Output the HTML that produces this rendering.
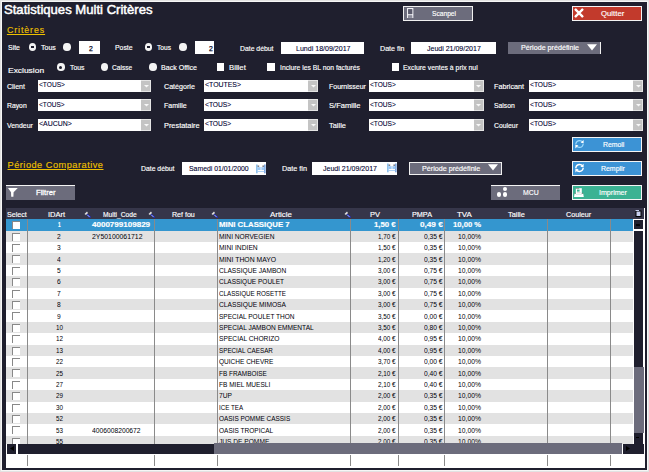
<!DOCTYPE html>
<html><head><meta charset="utf-8"><style>
html,body{margin:0;padding:0;width:649px;height:472px;overflow:hidden;background:#e2e2e2}
body>div,body>svg,#w>div,#w>svg{position:absolute}
#w{position:absolute;left:0;top:0;width:649px;height:472px}
#w div, #w svg{position:absolute}
.t{white-space:pre;font-family:"Liberation Sans",sans-serif;transform-origin:0 0}
</style></head><body><div id="w">
<div style="left:0px;top:0px;width:649px;height:472px;background:#e2e2e2;"></div>
<div style="left:1px;top:1px;width:647px;height:470px;background:#f6f6f6;"></div>
<div style="left:2px;top:2px;width:645px;height:468px;background:#1f1f2e;"></div>
<div class="t" style="left:4.40px;top:3.39px;font-size:13.6px;line-height:13.6px;font-weight:normal;color:#ffffff;transform:scaleX(0.9635);-webkit-text-stroke:0.5px #ffffff;">Statistiques Multi Critères</div>
<div style="left:403px;top:6px;width:70px;height:15px;background:#6c6c7c;box-sizing:border-box;border:1px solid #f0f0f0"></div>
<div class="t" style="left:431.70px;top:10.04px;font-size:7.4px;line-height:7.4px;font-weight:normal;color:#ffffff;transform:scaleX(0.8982);-webkit-text-stroke:0.15px #ffffff;">Scanpel</div>
<svg style="left:407px;top:8px" width="7" height="10" viewBox="0 0 7 10"><path d="M0.6 10 V0.6 H5.8 V10 M0.6 6.6 H5.8" fill="none" stroke="#f4f4f8" stroke-width="1.1"/><rect x="1.2" y="1.2" width="4" height="5" fill="#5a5a6c"/><path d="M1.5 8 H5 M1.5 9.3 H5" stroke="#b8b8c4" stroke-width="0.7"/></svg>
<div style="left:571.7px;top:5.8px;width:70.7px;height:15.2px;background:#c23a2c;box-sizing:border-box;border:1px solid #f4f4f4"></div>
<div class="t" style="left:600.60px;top:9.77px;font-size:7.6px;line-height:7.6px;font-weight:normal;color:#ffffff;transform:scaleX(1.0221);-webkit-text-stroke:0.15px #ffffff;">Quitter</div>
<svg style="left:574.2px;top:7.9px" width="10" height="10" viewBox="0 0 10 10"><path d="M1.4 1.4 L8.6 8.6 M8.6 1.4 L1.4 8.6" stroke="#fff" stroke-width="2.3"/><path d="M0.2 1.6 L1.6 0.2 L3 1.8 L1.8 3Z M9.8 1.6 L8.4 0.2 L7 1.8 L8.2 3Z M0.2 8.4 L1.6 9.8 L3 8.2 L1.8 7Z M9.8 8.4 L8.4 9.8 L7 8.2 L8.2 7Z" fill="#fff"/></svg>
<div class="t" style="left:6.90px;top:25.55px;font-size:8.8px;line-height:8.8px;font-weight:normal;color:#eec000;letter-spacing:0.925px;-webkit-text-stroke:0.15px #eec000;text-decoration:underline">Critères</div>
<div class="t" style="left:7.90px;top:44.21px;font-size:7.2px;line-height:7.2px;font-weight:normal;color:#ffffff;transform:scaleX(0.9685);-webkit-text-stroke:0.15px #ffffff;">Site</div>
<div class="t" style="left:40.70px;top:44.21px;font-size:7.2px;line-height:7.2px;font-weight:normal;color:#ffffff;transform:scaleX(0.9745);-webkit-text-stroke:0.15px #ffffff;">Tous</div>
<div class="t" style="left:115.40px;top:44.21px;font-size:7.2px;line-height:7.2px;font-weight:normal;color:#ffffff;transform:scaleX(0.9570);-webkit-text-stroke:0.15px #ffffff;">Poste</div>
<div class="t" style="left:156.70px;top:44.21px;font-size:7.2px;line-height:7.2px;font-weight:normal;color:#ffffff;transform:scaleX(0.9218);-webkit-text-stroke:0.15px #ffffff;">Tous</div>
<div style="left:28.8px;top:43px;width:7.4px;height:8px;background:#f4f4f4;border-radius:50%"></div>
<div style="left:31.2px;top:46.2px;width:2.6px;height:1.8px;background:#1f1f2e"></div>
<div style="left:63.4px;top:43.2px;width:7.2px;height:7.6px;background:#f4f4f4;border-radius:50%"></div>
<div style="left:144.60000000000002px;top:43px;width:7.4px;height:8px;background:#f4f4f4;border-radius:50%"></div>
<div style="left:147.0px;top:46.2px;width:2.6px;height:1.8px;background:#1f1f2e"></div>
<div style="left:179.4px;top:43.2px;width:7.2px;height:7.6px;background:#f4f4f4;border-radius:50%"></div>
<div style="left:79px;top:41.2px;width:21px;height:12.7px;background:#ffffff;"></div>
<div class="t" style="left:88.80px;top:44.57px;font-size:7.6px;line-height:7.6px;font-weight:normal;color:#000020;transform:scaleX(0.8974);-webkit-text-stroke:0.25px #000020;">2</div>
<div style="left:194.8px;top:41px;width:19px;height:13px;background:#ffffff;"></div>
<div class="t" style="left:209.00px;top:44.57px;font-size:7.6px;line-height:7.6px;font-weight:normal;color:#000020;transform:scaleX(0.8974);-webkit-text-stroke:0.25px #000020;">2</div>
<div class="t" style="left:239.70px;top:44.61px;font-size:7.2px;line-height:7.2px;font-weight:normal;color:#ffffff;transform:scaleX(0.9525);-webkit-text-stroke:0.15px #ffffff;">Date début</div>
<div style="left:280.5px;top:41.8px;width:83.5px;height:12px;background:#ffffff;"></div>
<div class="t" style="left:295.50px;top:44.74px;font-size:7.4px;line-height:7.4px;font-weight:normal;color:#000030;transform:scaleX(0.9538);-webkit-text-stroke:0.1px #000030;">Lundi 18/09/2017</div>
<div class="t" style="left:380.40px;top:44.61px;font-size:7.2px;line-height:7.2px;font-weight:normal;color:#ffffff;transform:scaleX(0.9927);-webkit-text-stroke:0.15px #ffffff;">Date fin</div>
<div style="left:410.9px;top:42px;width:85px;height:12px;background:#ffffff;"></div>
<div class="t" style="left:426.60px;top:44.74px;font-size:7.4px;line-height:7.4px;font-weight:normal;color:#000030;transform:scaleX(0.9485);-webkit-text-stroke:0.1px #000030;">Jeudi 21/09/2017</div>
<div style="left:508px;top:42.2px;width:93px;height:11.7px;background:#6c6c7c;box-sizing:border-box;border-right:1px solid #f0f0f0"></div>
<div class="t" style="left:521.00px;top:44.41px;font-size:7.2px;line-height:7.2px;font-weight:normal;color:#ffffff;transform:scaleX(0.9941);-webkit-text-stroke:0.15px #ffffff;">Période prédéfinie</div>
<svg style="left:587.4px;top:44.400000000000006px" width="10" height="7" viewBox="0 0 10 7"><path d="M0 0.2 H10 L5 6.4 Z" fill="#ffffff"/></svg>
<div class="t" style="left:8.30px;top:66.91px;font-size:7.2px;line-height:7.2px;font-weight:normal;color:#ffffff;transform:scaleX(1.1734);-webkit-text-stroke:0.15px #ffffff;">Exclusion</div>
<div style="left:57.4px;top:63.2px;width:7.2px;height:7.6px;background:#f4f4f4;border-radius:50%"></div>
<div style="left:59px;top:65.5px;width:3px;height:3px;background:#1f1f2e;border-radius:50%"></div>
<div class="t" style="left:69.50px;top:63.71px;font-size:7.2px;line-height:7.2px;font-weight:normal;color:#ffffff;transform:scaleX(0.9481);-webkit-text-stroke:0.15px #ffffff;">Tous</div>
<div style="left:100.60000000000001px;top:63.0px;width:7.2px;height:7.6px;background:#f4f4f4;border-radius:50%"></div>
<div class="t" style="left:111.80px;top:63.71px;font-size:7.2px;line-height:7.2px;font-weight:normal;color:#ffffff;transform:scaleX(0.9188);-webkit-text-stroke:0.15px #ffffff;">Caisse</div>
<div style="left:149.4px;top:63.0px;width:7.2px;height:7.6px;background:#f4f4f4;border-radius:50%"></div>
<div class="t" style="left:161.00px;top:63.71px;font-size:7.2px;line-height:7.2px;font-weight:normal;color:#ffffff;transform:scaleX(0.9829);-webkit-text-stroke:0.15px #ffffff;">Back Office</div>
<div style="left:216.6px;top:63.4px;width:7.9px;height:7.2px;background:#ffffff;"></div>
<div class="t" style="left:228.70px;top:63.71px;font-size:7.2px;line-height:7.2px;font-weight:normal;color:#ffffff;transform:scaleX(1.0774);-webkit-text-stroke:0.15px #ffffff;">Billet</div>
<div style="left:267.3px;top:63.4px;width:7.7px;height:7.2px;background:#ffffff;"></div>
<div class="t" style="left:279.60px;top:63.71px;font-size:7.2px;line-height:7.2px;font-weight:normal;color:#ffffff;transform:scaleX(0.9429);-webkit-text-stroke:0.15px #ffffff;">Inclure les BL non facturés</div>
<div style="left:391.5px;top:63.4px;width:7.3px;height:7.2px;background:#ffffff;"></div>
<div class="t" style="left:403.00px;top:63.71px;font-size:7.2px;line-height:7.2px;font-weight:normal;color:#ffffff;transform:scaleX(0.9539);-webkit-text-stroke:0.15px #ffffff;">Exclure ventes à prix nul</div>
<div class="t" style="left:7.40px;top:82.71px;font-size:7.2px;line-height:7.2px;font-weight:normal;color:#ffffff;transform:scaleX(0.9733);-webkit-text-stroke:0.15px #ffffff;">Client</div>
<div style="left:37.6px;top:79.8px;width:113.5px;height:12.2px;background:#ffffff;"></div>
<div style="left:141.1px;top:79.8px;width:10px;height:12.2px;background:#c4c4c4;box-sizing:border-box;border:1px solid #e4e4e4;border-left:none"></div>
<svg style="left:143.9px;top:84.8px" width="5" height="3" viewBox="0 0 5 3"><path d="M0 0 H5 L2.5 2.5 Z" fill="#f8f8f8"/></svg>
<div class="t" style="left:38.80px;top:81.11px;font-size:7.2px;line-height:7.2px;font-weight:normal;color:#000030;transform:scaleX(0.9173);-webkit-text-stroke:0.1px #000030;">&lt;TOUS&gt;</div>
<div class="t" style="left:7.40px;top:102.11px;font-size:7.2px;line-height:7.2px;font-weight:normal;color:#ffffff;transform:scaleX(0.9480);-webkit-text-stroke:0.15px #ffffff;">Rayon</div>
<div style="left:37.6px;top:99.2px;width:113.5px;height:12.2px;background:#ffffff;"></div>
<div style="left:141.1px;top:99.2px;width:10px;height:12.2px;background:#c4c4c4;box-sizing:border-box;border:1px solid #e4e4e4;border-left:none"></div>
<svg style="left:143.9px;top:104.2px" width="5" height="3" viewBox="0 0 5 3"><path d="M0 0 H5 L2.5 2.5 Z" fill="#f8f8f8"/></svg>
<div class="t" style="left:38.80px;top:100.51px;font-size:7.2px;line-height:7.2px;font-weight:normal;color:#000030;transform:scaleX(0.9032);-webkit-text-stroke:0.1px #000030;">&lt;TOUS&gt;</div>
<div class="t" style="left:7.40px;top:121.91px;font-size:7.2px;line-height:7.2px;font-weight:normal;color:#ffffff;transform:scaleX(0.9671);-webkit-text-stroke:0.15px #ffffff;">Vendeur</div>
<div style="left:37.6px;top:119.0px;width:113.5px;height:12.2px;background:#ffffff;"></div>
<div style="left:141.1px;top:119.0px;width:10px;height:12.2px;background:#c4c4c4;box-sizing:border-box;border:1px solid #e4e4e4;border-left:none"></div>
<svg style="left:143.9px;top:124.0px" width="5" height="3" viewBox="0 0 5 3"><path d="M0 0 H5 L2.5 2.5 Z" fill="#f8f8f8"/></svg>
<div class="t" style="left:38.80px;top:120.31px;font-size:7.2px;line-height:7.2px;font-weight:normal;color:#000030;transform:scaleX(0.9690);-webkit-text-stroke:0.1px #000030;">&lt;AUCUN&gt;</div>
<div class="t" style="left:163.90px;top:82.71px;font-size:7.2px;line-height:7.2px;font-weight:normal;color:#ffffff;transform:scaleX(0.9913);-webkit-text-stroke:0.15px #ffffff;">Catégorie</div>
<div style="left:203.6px;top:79.8px;width:114.29999999999998px;height:12.2px;background:#ffffff;"></div>
<div style="left:307.9px;top:79.8px;width:10px;height:12.2px;background:#c4c4c4;box-sizing:border-box;border:1px solid #e4e4e4;border-left:none"></div>
<svg style="left:310.7px;top:84.8px" width="5" height="3" viewBox="0 0 5 3"><path d="M0 0 H5 L2.5 2.5 Z" fill="#f8f8f8"/></svg>
<div class="t" style="left:204.80px;top:81.11px;font-size:7.2px;line-height:7.2px;font-weight:normal;color:#000030;transform:scaleX(0.9620);-webkit-text-stroke:0.1px #000030;">&lt;TOUTES&gt;</div>
<div class="t" style="left:163.90px;top:102.11px;font-size:7.2px;line-height:7.2px;font-weight:normal;color:#ffffff;transform:scaleX(0.9796);-webkit-text-stroke:0.15px #ffffff;">Famille</div>
<div style="left:203.6px;top:99.2px;width:114.29999999999998px;height:12.2px;background:#ffffff;"></div>
<div style="left:307.9px;top:99.2px;width:10px;height:12.2px;background:#c4c4c4;box-sizing:border-box;border:1px solid #e4e4e4;border-left:none"></div>
<svg style="left:310.7px;top:104.2px" width="5" height="3" viewBox="0 0 5 3"><path d="M0 0 H5 L2.5 2.5 Z" fill="#f8f8f8"/></svg>
<div class="t" style="left:204.80px;top:100.51px;font-size:7.2px;line-height:7.2px;font-weight:normal;color:#000030;transform:scaleX(0.9279);-webkit-text-stroke:0.1px #000030;">&lt;TOUS&gt;</div>
<div class="t" style="left:163.90px;top:121.91px;font-size:7.2px;line-height:7.2px;font-weight:normal;color:#ffffff;transform:scaleX(1.0240);-webkit-text-stroke:0.15px #ffffff;">Prestataire</div>
<div style="left:203.6px;top:119.0px;width:114.29999999999998px;height:12.2px;background:#ffffff;"></div>
<div style="left:307.9px;top:119.0px;width:10px;height:12.2px;background:#c4c4c4;box-sizing:border-box;border:1px solid #e4e4e4;border-left:none"></div>
<svg style="left:310.7px;top:124.0px" width="5" height="3" viewBox="0 0 5 3"><path d="M0 0 H5 L2.5 2.5 Z" fill="#f8f8f8"/></svg>
<div class="t" style="left:204.80px;top:120.31px;font-size:7.2px;line-height:7.2px;font-weight:normal;color:#000030;transform:scaleX(0.9279);-webkit-text-stroke:0.1px #000030;">&lt;TOUS&gt;</div>
<div class="t" style="left:328.90px;top:82.71px;font-size:7.2px;line-height:7.2px;font-weight:normal;color:#ffffff;transform:scaleX(0.9723);-webkit-text-stroke:0.15px #ffffff;">Fournisseur</div>
<div style="left:368.5px;top:79.8px;width:115.10000000000002px;height:12.2px;background:#ffffff;"></div>
<div style="left:473.6px;top:79.8px;width:10px;height:12.2px;background:#c4c4c4;box-sizing:border-box;border:1px solid #e4e4e4;border-left:none"></div>
<svg style="left:476.40000000000003px;top:84.8px" width="5" height="3" viewBox="0 0 5 3"><path d="M0 0 H5 L2.5 2.5 Z" fill="#f8f8f8"/></svg>
<div class="t" style="left:369.70px;top:81.11px;font-size:7.2px;line-height:7.2px;font-weight:normal;color:#000030;transform:scaleX(0.9138);-webkit-text-stroke:0.1px #000030;">&lt;TOUS&gt;</div>
<div class="t" style="left:328.90px;top:102.11px;font-size:7.2px;line-height:7.2px;font-weight:normal;color:#ffffff;transform:scaleX(1.0511);-webkit-text-stroke:0.15px #ffffff;">S/Famille</div>
<div style="left:368.5px;top:99.2px;width:115.10000000000002px;height:12.2px;background:#ffffff;"></div>
<div style="left:473.6px;top:99.2px;width:10px;height:12.2px;background:#c4c4c4;box-sizing:border-box;border:1px solid #e4e4e4;border-left:none"></div>
<svg style="left:476.40000000000003px;top:104.2px" width="5" height="3" viewBox="0 0 5 3"><path d="M0 0 H5 L2.5 2.5 Z" fill="#f8f8f8"/></svg>
<div class="t" style="left:369.70px;top:100.51px;font-size:7.2px;line-height:7.2px;font-weight:normal;color:#000030;transform:scaleX(0.9138);-webkit-text-stroke:0.1px #000030;">&lt;TOUS&gt;</div>
<div class="t" style="left:328.90px;top:121.91px;font-size:7.2px;line-height:7.2px;font-weight:normal;color:#ffffff;transform:scaleX(1.0372);-webkit-text-stroke:0.15px #ffffff;">Taille</div>
<div style="left:368.5px;top:119.0px;width:115.10000000000002px;height:12.2px;background:#ffffff;"></div>
<div style="left:473.6px;top:119.0px;width:10px;height:12.2px;background:#c4c4c4;box-sizing:border-box;border:1px solid #e4e4e4;border-left:none"></div>
<svg style="left:476.40000000000003px;top:124.0px" width="5" height="3" viewBox="0 0 5 3"><path d="M0 0 H5 L2.5 2.5 Z" fill="#f8f8f8"/></svg>
<div class="t" style="left:369.70px;top:120.31px;font-size:7.2px;line-height:7.2px;font-weight:normal;color:#000030;transform:scaleX(0.9138);-webkit-text-stroke:0.1px #000030;">&lt;TOUS&gt;</div>
<div class="t" style="left:494.20px;top:82.71px;font-size:7.2px;line-height:7.2px;font-weight:normal;color:#ffffff;transform:scaleX(1.0044);-webkit-text-stroke:0.15px #ffffff;">Fabricant</div>
<div style="left:528.7px;top:79.8px;width:114.09999999999991px;height:12.2px;background:#ffffff;"></div>
<div style="left:632.8px;top:79.8px;width:10px;height:12.2px;background:#c4c4c4;box-sizing:border-box;border:1px solid #e4e4e4;border-left:none"></div>
<svg style="left:635.5999999999999px;top:84.8px" width="5" height="3" viewBox="0 0 5 3"><path d="M0 0 H5 L2.5 2.5 Z" fill="#f8f8f8"/></svg>
<div class="t" style="left:529.90px;top:81.11px;font-size:7.2px;line-height:7.2px;font-weight:normal;color:#000030;transform:scaleX(0.9279);-webkit-text-stroke:0.1px #000030;">&lt;TOUS&gt;</div>
<div class="t" style="left:494.20px;top:102.11px;font-size:7.2px;line-height:7.2px;font-weight:normal;color:#ffffff;transform:scaleX(0.9461);-webkit-text-stroke:0.15px #ffffff;">Saison</div>
<div style="left:528.7px;top:99.2px;width:114.09999999999991px;height:12.2px;background:#ffffff;"></div>
<div style="left:632.8px;top:99.2px;width:10px;height:12.2px;background:#c4c4c4;box-sizing:border-box;border:1px solid #e4e4e4;border-left:none"></div>
<svg style="left:635.5999999999999px;top:104.2px" width="5" height="3" viewBox="0 0 5 3"><path d="M0 0 H5 L2.5 2.5 Z" fill="#f8f8f8"/></svg>
<div class="t" style="left:529.90px;top:100.51px;font-size:7.2px;line-height:7.2px;font-weight:normal;color:#000030;transform:scaleX(0.9279);-webkit-text-stroke:0.1px #000030;">&lt;TOUS&gt;</div>
<div class="t" style="left:494.20px;top:121.91px;font-size:7.2px;line-height:7.2px;font-weight:normal;color:#ffffff;transform:scaleX(0.9495);-webkit-text-stroke:0.15px #ffffff;">Couleur</div>
<div style="left:528.7px;top:119.0px;width:114.09999999999991px;height:12.2px;background:#ffffff;"></div>
<div style="left:632.8px;top:119.0px;width:10px;height:12.2px;background:#c4c4c4;box-sizing:border-box;border:1px solid #e4e4e4;border-left:none"></div>
<svg style="left:635.5999999999999px;top:124.0px" width="5" height="3" viewBox="0 0 5 3"><path d="M0 0 H5 L2.5 2.5 Z" fill="#f8f8f8"/></svg>
<div class="t" style="left:529.90px;top:120.31px;font-size:7.2px;line-height:7.2px;font-weight:normal;color:#000030;transform:scaleX(0.9279);-webkit-text-stroke:0.1px #000030;">&lt;TOUS&gt;</div>
<div style="left:571.7px;top:136.9px;width:70.5px;height:15.1px;background:#3c93d5;box-sizing:border-box;border:1px solid #f4f4f4"></div>
<div class="t" style="left:602.50px;top:140.64px;font-size:7.4px;line-height:7.4px;font-weight:normal;color:#ffffff;transform:scaleX(0.9304);-webkit-text-stroke:0.15px #ffffff;">Remoll</div>
<svg style="left:575px;top:139.4px" width="9" height="10" viewBox="0 0 9 10"><path d="M0.8 5 C1.2 2.6 3 1.6 4.6 1.6 C6 1.6 7 2.2 7.6 3" fill="none" stroke="#9fdcff" stroke-width="1.2"/><path d="M8.6 1 V4.4 L5.6 3.6Z" fill="#fff"/><path d="M8.2 5 C7.8 7.4 6 8.4 4.4 8.4 C3 8.4 2 7.8 1.4 7" fill="none" stroke="#9fdcff" stroke-width="1.2"/><path d="M0.4 9.4 V5.6 L3.4 6.4Z" fill="#fff"/></svg>
<div style="left:571.7px;top:161.1px;width:70.5px;height:15.1px;background:#3c93d5;box-sizing:border-box;border:1px solid #f4f4f4"></div>
<div class="t" style="left:600.60px;top:164.54px;font-size:7.4px;line-height:7.4px;font-weight:normal;color:#ffffff;transform:scaleX(0.9384);-webkit-text-stroke:0.15px #ffffff;">Remplir</div>
<svg style="left:575.2px;top:163.4px" width="9" height="10" viewBox="0 0 9 10"><path d="M0.8 5 C1.2 2.6 3 1.6 4.6 1.6 C6 1.6 7 2.2 7.6 3" fill="none" stroke="#fff" stroke-width="1.5"/><path d="M8.6 0.8 V4.6 L5.4 3.8Z" fill="#fff"/><path d="M8.2 5 C7.8 7.4 6 8.4 4.4 8.4 C3 8.4 2 7.8 1.4 7" fill="none" stroke="#fff" stroke-width="1.5"/><path d="M0.4 9.6 V5.4 L3.6 6.2Z" fill="#fff"/></svg>
<div class="t" style="left:7.50px;top:160.81px;font-size:9.2px;line-height:9.2px;font-weight:normal;color:#eec000;letter-spacing:0.510px;-webkit-text-stroke:0.15px #eec000;text-decoration:underline">Période Comparative</div>
<div class="t" style="left:140.50px;top:164.91px;font-size:7.2px;line-height:7.2px;font-weight:normal;color:#ffffff;transform:scaleX(0.9525);-webkit-text-stroke:0.15px #ffffff;">Date début</div>
<div style="left:181.6px;top:162px;width:84.1px;height:12.6px;background:#ffffff;"></div>
<div class="t" style="left:189.00px;top:165.04px;font-size:7.4px;line-height:7.4px;font-weight:normal;color:#000030;transform:scaleX(0.9297);-webkit-text-stroke:0.1px #000030;">Samedi 01/01/2000</div>
<svg style="left:255.6px;top:163.8px" width="10" height="10" viewBox="0 0 10 10"><rect x="0.4" y="0.5" width="1" height="8.8" fill="#4a9ae0"/><rect x="8.4" y="0.5" width="1" height="8.8" fill="#2a6ac8"/><rect x="1.6" y="1.6" width="1.6" height="1.1" fill="#505058"/><rect x="6.4" y="1.6" width="1.6" height="1.1" fill="#505058"/><rect x="1.4" y="3.2" width="7" height="2.8" fill="#9cc8f6"/><rect x="4.6" y="3.2" width="0.8" height="5" fill="#ffffff"/><rect x="1.4" y="7.2" width="7" height="0.8" fill="#9cc8f6"/></svg>
<div class="t" style="left:281.60px;top:164.91px;font-size:7.2px;line-height:7.2px;font-weight:normal;color:#ffffff;transform:scaleX(1.0088);-webkit-text-stroke:0.15px #ffffff;">Date fin</div>
<div style="left:311.6px;top:162px;width:85.4px;height:12.6px;background:#ffffff;"></div>
<div class="t" style="left:323.00px;top:165.04px;font-size:7.4px;line-height:7.4px;font-weight:normal;color:#000030;transform:scaleX(0.9521);-webkit-text-stroke:0.1px #000030;">Jeudi 21/09/2017</div>
<svg style="left:387px;top:163.4px" width="10" height="10" viewBox="0 0 10 10"><rect x="0.4" y="0.5" width="1" height="8.8" fill="#4a9ae0"/><rect x="8.4" y="0.5" width="1" height="8.8" fill="#2a6ac8"/><rect x="1.6" y="1.6" width="1.6" height="1.1" fill="#505058"/><rect x="6.4" y="1.6" width="1.6" height="1.1" fill="#505058"/><rect x="1.4" y="3.2" width="7" height="2.8" fill="#9cc8f6"/><rect x="4.6" y="3.2" width="0.8" height="5" fill="#ffffff"/><rect x="1.4" y="7.2" width="7" height="0.8" fill="#9cc8f6"/></svg>
<div style="left:409px;top:162px;width:92.8px;height:13px;background:#6c6c7c;box-sizing:border-box;border:1px solid #f0f0f0"></div>
<div class="t" style="left:422.00px;top:164.91px;font-size:7.2px;line-height:7.2px;font-weight:normal;color:#ffffff;transform:scaleX(0.9975);-webkit-text-stroke:0.15px #ffffff;">Période prédéfinie</div>
<svg style="left:488.2px;top:164.2px" width="10" height="7" viewBox="0 0 10 7"><path d="M0 0.2 H10 L5 6.4 Z" fill="#ffffff"/></svg>
<div style="left:6px;top:184.9px;width:69.2px;height:14.9px;background:#6c6c7c;box-sizing:border-box;border-top:1.3px solid #f4f4f4"></div>
<div class="t" style="left:36.30px;top:188.57px;font-size:7.6px;line-height:7.6px;font-weight:normal;color:#ffffff;transform:scaleX(1.0048);-webkit-text-stroke:0.3px #ffffff;">Filtrer</div>
<svg style="left:7.8px;top:187.8px" width="10" height="9" viewBox="0 0 10 9"><path d="M0 0 H9.8 L5.6 4.2 L5.4 8.8 L3.2 8.8 L3 4.2 Z" fill="#fff"/></svg>
<div style="left:491px;top:184.9px;width:69.2px;height:14.9px;background:#6c6c7c;box-sizing:border-box;border-top:1.3px solid #f4f4f4"></div>
<div class="t" style="left:523.10px;top:188.74px;font-size:7.4px;line-height:7.4px;font-weight:normal;color:#ffffff;transform:scaleX(0.9321);-webkit-text-stroke:0.15px #ffffff;">MCU</div>
<div style="left:496.7px;top:192.4px;width:4.4px;height:4.4px;border-radius:50%;background:#fff"></div>
<div style="left:502.6px;top:187.0px;width:4.4px;height:4.4px;border-radius:50%;background:#fff"></div>
<div style="left:502.6px;top:192.4px;width:4.4px;height:4.4px;border-radius:50%;background:#fff"></div>
<div style="left:571.7px;top:185.2px;width:70.5px;height:14.8px;background:#3bb293;box-sizing:border-box;border:1px solid #f4f4f4"></div>
<div class="t" style="left:598.90px;top:188.64px;font-size:7.4px;line-height:7.4px;font-weight:normal;color:#ffffff;transform:scaleX(0.9569);-webkit-text-stroke:0.15px #ffffff;">Imprimer</div>
<svg style="left:574.2px;top:188px" width="10" height="9" viewBox="0 0 10 9"><rect x="1.8" y="0.2" width="6" height="6" fill="#fff"/><rect x="3" y="1.6" width="2.6" height="2" fill="#3bb293"/><path d="M1.8 0.3 H5.2" stroke="#6a4a4a" stroke-width="0.6"/><rect x="3" y="4.4" width="3.6" height="0.8" fill="#c8c8c8"/><path d="M0 8.9 L0.6 5.4 H1.8 V6.2 H7.8 V5.4 H9.2 L9.8 8.9Z" fill="#fff"/><path d="M0.6 5.4 H1.8 M7.8 5.4 H9.2" stroke="#6a4a4a" stroke-width="0.6"/></svg>
<div style="left:6px;top:208px;width:639px;height:260px;background:#ffffff;"></div>
<div style="left:644px;top:208px;width:1px;height:260px;background:#ffffff;"></div>
<div style="left:6px;top:208px;width:638px;height:11px;background:#36364a;"></div>
<div class="t" style="left:7.40px;top:210.61px;font-size:7.2px;line-height:7.2px;font-weight:normal;color:#ffffff;transform:scaleX(0.9908);-webkit-text-stroke:0.15px #ffffff;">Select</div>
<div class="t" style="left:47.80px;top:210.61px;font-size:7.2px;line-height:7.2px;font-weight:normal;color:#ffffff;transform:scaleX(1.0504);-webkit-text-stroke:0.15px #ffffff;">IDArt</div>
<div class="t" style="left:102.80px;top:210.61px;font-size:7.2px;line-height:7.2px;font-weight:normal;color:#ffffff;transform:scaleX(0.9269);-webkit-text-stroke:0.15px #ffffff;">Multi_Code</div>
<div class="t" style="left:172.00px;top:210.61px;font-size:7.2px;line-height:7.2px;font-weight:normal;color:#ffffff;transform:scaleX(0.9833);-webkit-text-stroke:0.15px #ffffff;">Ref fou</div>
<div class="t" style="left:269.90px;top:210.61px;font-size:7.2px;line-height:7.2px;font-weight:normal;color:#ffffff;transform:scaleX(1.1009);-webkit-text-stroke:0.15px #ffffff;">Article</div>
<div class="t" style="left:370.00px;top:210.61px;font-size:7.2px;line-height:7.2px;font-weight:normal;color:#ffffff;transform:scaleX(1.0423);-webkit-text-stroke:0.15px #ffffff;">PV</div>
<div class="t" style="left:412.00px;top:210.61px;font-size:7.2px;line-height:7.2px;font-weight:normal;color:#ffffff;transform:scaleX(1.0079);-webkit-text-stroke:0.15px #ffffff;">PMPA</div>
<div class="t" style="left:457.00px;top:210.61px;font-size:7.2px;line-height:7.2px;font-weight:normal;color:#ffffff;transform:scaleX(1.1001);-webkit-text-stroke:0.15px #ffffff;">TVA</div>
<div class="t" style="left:507.70px;top:210.61px;font-size:7.2px;line-height:7.2px;font-weight:normal;color:#ffffff;transform:scaleX(1.0250);-webkit-text-stroke:0.15px #ffffff;">Taille</div>
<div class="t" style="left:566.40px;top:210.61px;font-size:7.2px;line-height:7.2px;font-weight:normal;color:#ffffff;transform:scaleX(0.9971);-webkit-text-stroke:0.15px #ffffff;">Couleur</div>
<svg style="left:84.4px;top:210.5px" width="7" height="7" viewBox="0 0 7 7"><path d="M0.5 3 L3 0.5 L4 2 L2 4 Z" fill="#e0e0e0"/><path d="M3 3.5 L6.5 6.5" stroke="#2030e0" stroke-width="1.3"/><path d="M3.5 4 L5.5 6" stroke="#ffffff" stroke-width="0.6"/></svg>
<svg style="left:147.8px;top:210.5px" width="7" height="7" viewBox="0 0 7 7"><path d="M0.5 3 L3 0.5 L4 2 L2 4 Z" fill="#e0e0e0"/><path d="M3 3.5 L6.5 6.5" stroke="#2030e0" stroke-width="1.3"/><path d="M3.5 4 L5.5 6" stroke="#ffffff" stroke-width="0.6"/></svg>
<svg style="left:211.2px;top:210.5px" width="7" height="7" viewBox="0 0 7 7"><path d="M0.5 3 L3 0.5 L4 2 L2 4 Z" fill="#e0e0e0"/><path d="M3 3.5 L6.5 6.5" stroke="#2030e0" stroke-width="1.3"/><path d="M3.5 4 L5.5 6" stroke="#ffffff" stroke-width="0.6"/></svg>
<svg style="left:344.3px;top:210.5px" width="7" height="7" viewBox="0 0 7 7"><path d="M0.5 3 L3 0.5 L4 2 L2 4 Z" fill="#e0e0e0"/><path d="M3 3.5 L6.5 6.5" stroke="#2030e0" stroke-width="1.3"/><path d="M3.5 4 L5.5 6" stroke="#ffffff" stroke-width="0.6"/></svg>
<svg style="left:634.5px;top:209px" width="7" height="8" viewBox="0 0 7 8"><rect x="1" y="2" width="5" height="5.5" fill="#c8d0f0" stroke="#000" stroke-width="1"/><path d="M0.5 1.5 H4" stroke="#c8d0f0" stroke-width="1"/></svg>
<div style="left:6px;top:219.3px;width:627px;height:224.3px;overflow:hidden"><div style="left:0;top:-0.3px;width:627px;height:1px;background:#3496cf"></div><div style="left:0;top:0.0px;width:627px;height:11.5px;background:#3496cf"></div><div style="left:0;top:11.4px;width:627px;height:11.5px;background:#e2e2e2"></div><div style="left:0;top:22.8px;width:627px;height:11.5px;background:#ffffff"></div><div style="left:0;top:34.2px;width:627px;height:11.5px;background:#e2e2e2"></div><div style="left:0;top:45.6px;width:627px;height:11.5px;background:#ffffff"></div><div style="left:0;top:57.0px;width:627px;height:11.5px;background:#e2e2e2"></div><div style="left:0;top:68.4px;width:627px;height:11.5px;background:#ffffff"></div><div style="left:0;top:79.8px;width:627px;height:11.5px;background:#e2e2e2"></div><div style="left:0;top:91.2px;width:627px;height:11.5px;background:#ffffff"></div><div style="left:0;top:102.6px;width:627px;height:11.5px;background:#e2e2e2"></div><div style="left:0;top:114.0px;width:627px;height:11.5px;background:#ffffff"></div><div style="left:0;top:125.4px;width:627px;height:11.5px;background:#e2e2e2"></div><div style="left:0;top:136.8px;width:627px;height:11.5px;background:#ffffff"></div><div style="left:0;top:148.2px;width:627px;height:11.5px;background:#e2e2e2"></div><div style="left:0;top:159.6px;width:627px;height:11.5px;background:#ffffff"></div><div style="left:0;top:171.0px;width:627px;height:11.5px;background:#e2e2e2"></div><div style="left:0;top:182.4px;width:627px;height:11.5px;background:#ffffff"></div><div style="left:0;top:193.8px;width:627px;height:11.5px;background:#e2e2e2"></div><div style="left:0;top:205.2px;width:627px;height:11.5px;background:#ffffff"></div><div style="left:0;top:216.6px;width:627px;height:11.5px;background:#e2e2e2"></div>
</div>
<div style="left:27px;top:219px;width:1px;height:224.60000000000002px;background:#8a8a8a;"></div>
<div style="left:153.7px;top:219px;width:1px;height:224.60000000000002px;background:#8a8a8a;"></div>
<div style="left:216.8px;top:219px;width:1px;height:224.60000000000002px;background:#8a8a8a;"></div>
<div style="left:350.2px;top:219px;width:1px;height:224.60000000000002px;background:#8a8a8a;"></div>
<div style="left:398.2px;top:219px;width:1px;height:224.60000000000002px;background:#8a8a8a;"></div>
<div style="left:444.2px;top:219px;width:1px;height:224.60000000000002px;background:#8a8a8a;"></div>
<div style="left:547.2px;top:219px;width:1px;height:224.60000000000002px;background:#8a8a8a;"></div>
<div style="left:610.4px;top:219px;width:1px;height:224.60000000000002px;background:#8a8a8a;"></div>
<div style="left:12px;top:221.1px;width:8px;height:8px;background:#fff;box-sizing:border-box;border-top:1px solid #888;border-left:1px solid #888"></div>
<div class="t" style="left:57.65px;top:221.47px;font-size:7.0px;line-height:7.0px;font-weight:bold;color:#ffffff;transform:scaleX(0.6912);-webkit-text-stroke:0.15px #ffffff;">1</div>
<div class="t" style="left:92.30px;top:221.47px;font-size:7.0px;line-height:7.0px;font-weight:bold;color:#ffffff;transform:scaleX(1.1477);-webkit-text-stroke:0.15px #ffffff;">4000799109829</div>
<div class="t" style="left:218.90px;top:221.47px;font-size:7.0px;line-height:7.0px;font-weight:bold;color:#ffffff;transform:scaleX(1.1135);-webkit-text-stroke:0.15px #ffffff;">MINI CLASSIQUE 7</div>
<div class="t" style="left:373.70px;top:221.47px;font-size:7.0px;line-height:7.0px;font-weight:bold;color:#ffffff;transform:scaleX(1.1146);-webkit-text-stroke:0.15px #ffffff;">1,50 €</div>
<div class="t" style="left:419.60px;top:221.47px;font-size:7.0px;line-height:7.0px;font-weight:bold;color:#ffffff;transform:scaleX(1.1660);-webkit-text-stroke:0.15px #ffffff;">0,49 €</div>
<div class="t" style="left:453.40px;top:221.47px;font-size:7.0px;line-height:7.0px;font-weight:bold;color:#ffffff;transform:scaleX(1.0978);-webkit-text-stroke:0.15px #ffffff;">10,00 %</div>
<div style="left:12px;top:232.5px;width:8px;height:8px;background:#fff;box-sizing:border-box;border-top:1px solid #888;border-left:1px solid #888"></div>
<div class="t" style="left:57.15px;top:232.87px;font-size:7.0px;line-height:7.0px;font-weight:normal;color:#000008;transform:scaleX(0.9472);">2</div>
<div class="t" style="left:92.30px;top:232.87px;font-size:7.0px;line-height:7.0px;font-weight:normal;color:#000008;transform:scaleX(0.9827);">2Y50100061712</div>
<div class="t" style="left:218.90px;top:232.87px;font-size:7.0px;line-height:7.0px;font-weight:normal;color:#000008;transform:scaleX(0.9469);">MINI NORVEGIEN</div>
<div class="t" style="left:377.80px;top:232.87px;font-size:7.0px;line-height:7.0px;font-weight:normal;color:#000008;transform:scaleX(0.9040);">1,70 €</div>
<div class="t" style="left:423.70px;top:232.87px;font-size:7.0px;line-height:7.0px;font-weight:normal;color:#000008;transform:scaleX(0.9554);">0,35 €</div>
<div class="t" style="left:457.50px;top:232.87px;font-size:7.0px;line-height:7.0px;font-weight:normal;color:#000008;transform:scaleX(0.9642);">10,00%</div>
<div style="left:12px;top:243.9px;width:8px;height:8px;background:#fff;box-sizing:border-box;border-top:1px solid #888;border-left:1px solid #888"></div>
<div class="t" style="left:57.15px;top:244.27px;font-size:7.0px;line-height:7.0px;font-weight:normal;color:#000008;transform:scaleX(0.9472);">3</div>
<div class="t" style="left:218.90px;top:244.27px;font-size:7.0px;line-height:7.0px;font-weight:normal;color:#000008;transform:scaleX(0.9567);">MINI INDIEN</div>
<div class="t" style="left:377.80px;top:244.27px;font-size:7.0px;line-height:7.0px;font-weight:normal;color:#000008;transform:scaleX(0.9040);">1,50 €</div>
<div class="t" style="left:423.70px;top:244.27px;font-size:7.0px;line-height:7.0px;font-weight:normal;color:#000008;transform:scaleX(0.9554);">0,35 €</div>
<div class="t" style="left:457.50px;top:244.27px;font-size:7.0px;line-height:7.0px;font-weight:normal;color:#000008;transform:scaleX(0.9642);">10,00%</div>
<div style="left:12px;top:255.3px;width:8px;height:8px;background:#fff;box-sizing:border-box;border-top:1px solid #888;border-left:1px solid #888"></div>
<div class="t" style="left:57.15px;top:255.67px;font-size:7.0px;line-height:7.0px;font-weight:normal;color:#000008;transform:scaleX(0.9472);">4</div>
<div class="t" style="left:218.90px;top:255.67px;font-size:7.0px;line-height:7.0px;font-weight:normal;color:#000008;transform:scaleX(0.9766);">MINI THON MAYO</div>
<div class="t" style="left:377.80px;top:255.67px;font-size:7.0px;line-height:7.0px;font-weight:normal;color:#000008;transform:scaleX(0.9040);">1,20 €</div>
<div class="t" style="left:423.70px;top:255.67px;font-size:7.0px;line-height:7.0px;font-weight:normal;color:#000008;transform:scaleX(0.9554);">0,35 €</div>
<div class="t" style="left:457.50px;top:255.67px;font-size:7.0px;line-height:7.0px;font-weight:normal;color:#000008;transform:scaleX(0.9642);">10,00%</div>
<div style="left:12px;top:266.7px;width:8px;height:8px;background:#fff;box-sizing:border-box;border-top:1px solid #888;border-left:1px solid #888"></div>
<div class="t" style="left:57.15px;top:267.07px;font-size:7.0px;line-height:7.0px;font-weight:normal;color:#000008;transform:scaleX(0.9472);">5</div>
<div class="t" style="left:218.90px;top:267.07px;font-size:7.0px;line-height:7.0px;font-weight:normal;color:#000008;transform:scaleX(0.9454);">CLASSIQUE JAMBON</div>
<div class="t" style="left:377.80px;top:267.07px;font-size:7.0px;line-height:7.0px;font-weight:normal;color:#000008;transform:scaleX(0.9040);">3,00 €</div>
<div class="t" style="left:423.70px;top:267.07px;font-size:7.0px;line-height:7.0px;font-weight:normal;color:#000008;transform:scaleX(0.9554);">0,75 €</div>
<div class="t" style="left:457.50px;top:267.07px;font-size:7.0px;line-height:7.0px;font-weight:normal;color:#000008;transform:scaleX(0.9642);">10,00%</div>
<div style="left:12px;top:278.1px;width:8px;height:8px;background:#fff;box-sizing:border-box;border-top:1px solid #888;border-left:1px solid #888"></div>
<div class="t" style="left:57.15px;top:278.47px;font-size:7.0px;line-height:7.0px;font-weight:normal;color:#000008;transform:scaleX(0.9472);">6</div>
<div class="t" style="left:218.90px;top:278.47px;font-size:7.0px;line-height:7.0px;font-weight:normal;color:#000008;transform:scaleX(0.9282);">CLASSIQUE POULET</div>
<div class="t" style="left:377.80px;top:278.47px;font-size:7.0px;line-height:7.0px;font-weight:normal;color:#000008;transform:scaleX(0.9040);">3,00 €</div>
<div class="t" style="left:423.70px;top:278.47px;font-size:7.0px;line-height:7.0px;font-weight:normal;color:#000008;transform:scaleX(0.9554);">0,75 €</div>
<div class="t" style="left:457.50px;top:278.47px;font-size:7.0px;line-height:7.0px;font-weight:normal;color:#000008;transform:scaleX(0.9642);">10,00%</div>
<div style="left:12px;top:289.5px;width:8px;height:8px;background:#fff;box-sizing:border-box;border-top:1px solid #888;border-left:1px solid #888"></div>
<div class="t" style="left:57.15px;top:289.87px;font-size:7.0px;line-height:7.0px;font-weight:normal;color:#000008;transform:scaleX(0.9472);">7</div>
<div class="t" style="left:218.90px;top:289.87px;font-size:7.0px;line-height:7.0px;font-weight:normal;color:#000008;transform:scaleX(0.8924);">CLASSIQUE ROSETTE</div>
<div class="t" style="left:377.80px;top:289.87px;font-size:7.0px;line-height:7.0px;font-weight:normal;color:#000008;transform:scaleX(0.9040);">3,00 €</div>
<div class="t" style="left:423.70px;top:289.87px;font-size:7.0px;line-height:7.0px;font-weight:normal;color:#000008;transform:scaleX(0.9554);">0,75 €</div>
<div class="t" style="left:457.50px;top:289.87px;font-size:7.0px;line-height:7.0px;font-weight:normal;color:#000008;transform:scaleX(0.9642);">10,00%</div>
<div style="left:12px;top:300.9px;width:8px;height:8px;background:#fff;box-sizing:border-box;border-top:1px solid #888;border-left:1px solid #888"></div>
<div class="t" style="left:57.15px;top:301.27px;font-size:7.0px;line-height:7.0px;font-weight:normal;color:#000008;transform:scaleX(0.9472);">8</div>
<div class="t" style="left:218.90px;top:301.27px;font-size:7.0px;line-height:7.0px;font-weight:normal;color:#000008;transform:scaleX(0.9516);">CLASSIQUE MIMOSA</div>
<div class="t" style="left:377.80px;top:301.27px;font-size:7.0px;line-height:7.0px;font-weight:normal;color:#000008;transform:scaleX(0.9040);">3,00 €</div>
<div class="t" style="left:423.70px;top:301.27px;font-size:7.0px;line-height:7.0px;font-weight:normal;color:#000008;transform:scaleX(0.9554);">0,75 €</div>
<div class="t" style="left:457.50px;top:301.27px;font-size:7.0px;line-height:7.0px;font-weight:normal;color:#000008;transform:scaleX(0.9642);">10,00%</div>
<div style="left:12px;top:312.3px;width:8px;height:8px;background:#fff;box-sizing:border-box;border-top:1px solid #888;border-left:1px solid #888"></div>
<div class="t" style="left:57.15px;top:312.67px;font-size:7.0px;line-height:7.0px;font-weight:normal;color:#000008;transform:scaleX(0.9472);">9</div>
<div class="t" style="left:218.90px;top:312.67px;font-size:7.0px;line-height:7.0px;font-weight:normal;color:#000008;transform:scaleX(0.9344);">SPECIAL POULET THON</div>
<div class="t" style="left:377.80px;top:312.67px;font-size:7.0px;line-height:7.0px;font-weight:normal;color:#000008;transform:scaleX(0.9040);">3,50 €</div>
<div class="t" style="left:423.70px;top:312.67px;font-size:7.0px;line-height:7.0px;font-weight:normal;color:#000008;transform:scaleX(0.9554);">0,00 €</div>
<div class="t" style="left:457.50px;top:312.67px;font-size:7.0px;line-height:7.0px;font-weight:normal;color:#000008;transform:scaleX(0.9642);">10,00%</div>
<div style="left:12px;top:323.7px;width:8px;height:8px;background:#fff;box-sizing:border-box;border-top:1px solid #888;border-left:1px solid #888"></div>
<div class="t" style="left:55.50px;top:324.07px;font-size:7.0px;line-height:7.0px;font-weight:normal;color:#000008;transform:scaleX(0.8978);">10</div>
<div class="t" style="left:218.90px;top:324.07px;font-size:7.0px;line-height:7.0px;font-weight:normal;color:#000008;transform:scaleX(0.9400);">SPECIAL JAMBON EMMENTAL</div>
<div class="t" style="left:377.80px;top:324.07px;font-size:7.0px;line-height:7.0px;font-weight:normal;color:#000008;transform:scaleX(0.9040);">3,50 €</div>
<div class="t" style="left:423.70px;top:324.07px;font-size:7.0px;line-height:7.0px;font-weight:normal;color:#000008;transform:scaleX(0.9554);">0,80 €</div>
<div class="t" style="left:457.50px;top:324.07px;font-size:7.0px;line-height:7.0px;font-weight:normal;color:#000008;transform:scaleX(0.9642);">10,00%</div>
<div style="left:12px;top:335.1px;width:8px;height:8px;background:#fff;box-sizing:border-box;border-top:1px solid #888;border-left:1px solid #888"></div>
<div class="t" style="left:55.50px;top:335.47px;font-size:7.0px;line-height:7.0px;font-weight:normal;color:#000008;transform:scaleX(0.8978);">12</div>
<div class="t" style="left:218.90px;top:335.47px;font-size:7.0px;line-height:7.0px;font-weight:normal;color:#000008;transform:scaleX(0.9523);">SPECIAL CHORIZO</div>
<div class="t" style="left:377.80px;top:335.47px;font-size:7.0px;line-height:7.0px;font-weight:normal;color:#000008;transform:scaleX(0.9040);">4,00 €</div>
<div class="t" style="left:423.70px;top:335.47px;font-size:7.0px;line-height:7.0px;font-weight:normal;color:#000008;transform:scaleX(0.9554);">0,95 €</div>
<div class="t" style="left:457.50px;top:335.47px;font-size:7.0px;line-height:7.0px;font-weight:normal;color:#000008;transform:scaleX(0.9642);">10,00%</div>
<div style="left:12px;top:346.5px;width:8px;height:8px;background:#fff;box-sizing:border-box;border-top:1px solid #888;border-left:1px solid #888"></div>
<div class="t" style="left:55.50px;top:346.87px;font-size:7.0px;line-height:7.0px;font-weight:normal;color:#000008;transform:scaleX(0.8978);">13</div>
<div class="t" style="left:218.90px;top:346.87px;font-size:7.0px;line-height:7.0px;font-weight:normal;color:#000008;transform:scaleX(0.8976);">SPECIAL CAESAR</div>
<div class="t" style="left:377.80px;top:346.87px;font-size:7.0px;line-height:7.0px;font-weight:normal;color:#000008;transform:scaleX(0.9040);">4,00 €</div>
<div class="t" style="left:423.70px;top:346.87px;font-size:7.0px;line-height:7.0px;font-weight:normal;color:#000008;transform:scaleX(0.9554);">0,95 €</div>
<div class="t" style="left:457.50px;top:346.87px;font-size:7.0px;line-height:7.0px;font-weight:normal;color:#000008;transform:scaleX(0.9642);">10,00%</div>
<div style="left:12px;top:357.9px;width:8px;height:8px;background:#fff;box-sizing:border-box;border-top:1px solid #888;border-left:1px solid #888"></div>
<div class="t" style="left:55.50px;top:358.27px;font-size:7.0px;line-height:7.0px;font-weight:normal;color:#000008;transform:scaleX(0.8978);">22</div>
<div class="t" style="left:218.90px;top:358.27px;font-size:7.0px;line-height:7.0px;font-weight:normal;color:#000008;transform:scaleX(0.9307);">QUICHE CHEVRE</div>
<div class="t" style="left:377.80px;top:358.27px;font-size:7.0px;line-height:7.0px;font-weight:normal;color:#000008;transform:scaleX(0.9040);">3,70 €</div>
<div class="t" style="left:423.70px;top:358.27px;font-size:7.0px;line-height:7.0px;font-weight:normal;color:#000008;transform:scaleX(0.9554);">0,00 €</div>
<div class="t" style="left:457.50px;top:358.27px;font-size:7.0px;line-height:7.0px;font-weight:normal;color:#000008;transform:scaleX(0.9642);">10,00%</div>
<div style="left:12px;top:369.3px;width:8px;height:8px;background:#fff;box-sizing:border-box;border-top:1px solid #888;border-left:1px solid #888"></div>
<div class="t" style="left:55.50px;top:369.67px;font-size:7.0px;line-height:7.0px;font-weight:normal;color:#000008;transform:scaleX(0.8978);">25</div>
<div class="t" style="left:218.90px;top:369.67px;font-size:7.0px;line-height:7.0px;font-weight:normal;color:#000008;transform:scaleX(0.9170);">FB FRAMBOISE</div>
<div class="t" style="left:377.80px;top:369.67px;font-size:7.0px;line-height:7.0px;font-weight:normal;color:#000008;transform:scaleX(0.9040);">2,10 €</div>
<div class="t" style="left:423.70px;top:369.67px;font-size:7.0px;line-height:7.0px;font-weight:normal;color:#000008;transform:scaleX(0.9554);">0,40 €</div>
<div class="t" style="left:457.50px;top:369.67px;font-size:7.0px;line-height:7.0px;font-weight:normal;color:#000008;transform:scaleX(0.9642);">10,00%</div>
<div style="left:12px;top:380.7px;width:8px;height:8px;background:#fff;box-sizing:border-box;border-top:1px solid #888;border-left:1px solid #888"></div>
<div class="t" style="left:55.50px;top:381.07px;font-size:7.0px;line-height:7.0px;font-weight:normal;color:#000008;transform:scaleX(0.8978);">27</div>
<div class="t" style="left:218.90px;top:381.07px;font-size:7.0px;line-height:7.0px;font-weight:normal;color:#000008;transform:scaleX(0.9312);">FB MIEL MUESLI</div>
<div class="t" style="left:377.80px;top:381.07px;font-size:7.0px;line-height:7.0px;font-weight:normal;color:#000008;transform:scaleX(0.9040);">2,10 €</div>
<div class="t" style="left:423.70px;top:381.07px;font-size:7.0px;line-height:7.0px;font-weight:normal;color:#000008;transform:scaleX(0.9554);">0,40 €</div>
<div class="t" style="left:457.50px;top:381.07px;font-size:7.0px;line-height:7.0px;font-weight:normal;color:#000008;transform:scaleX(0.9642);">10,00%</div>
<div style="left:12px;top:392.1px;width:8px;height:8px;background:#fff;box-sizing:border-box;border-top:1px solid #888;border-left:1px solid #888"></div>
<div class="t" style="left:55.50px;top:392.47px;font-size:7.0px;line-height:7.0px;font-weight:normal;color:#000008;transform:scaleX(0.8978);">29</div>
<div class="t" style="left:218.90px;top:392.47px;font-size:7.0px;line-height:7.0px;font-weight:normal;color:#000008;transform:scaleX(0.9541);">7UP</div>
<div class="t" style="left:377.80px;top:392.47px;font-size:7.0px;line-height:7.0px;font-weight:normal;color:#000008;transform:scaleX(0.9040);">2,00 €</div>
<div class="t" style="left:423.70px;top:392.47px;font-size:7.0px;line-height:7.0px;font-weight:normal;color:#000008;transform:scaleX(0.9554);">0,35 €</div>
<div class="t" style="left:457.50px;top:392.47px;font-size:7.0px;line-height:7.0px;font-weight:normal;color:#000008;transform:scaleX(0.9642);">10,00%</div>
<div style="left:12px;top:403.5px;width:8px;height:8px;background:#fff;box-sizing:border-box;border-top:1px solid #888;border-left:1px solid #888"></div>
<div class="t" style="left:55.50px;top:403.87px;font-size:7.0px;line-height:7.0px;font-weight:normal;color:#000008;transform:scaleX(0.8978);">30</div>
<div class="t" style="left:218.90px;top:403.87px;font-size:7.0px;line-height:7.0px;font-weight:normal;color:#000008;transform:scaleX(0.8890);">ICE TEA</div>
<div class="t" style="left:377.80px;top:403.87px;font-size:7.0px;line-height:7.0px;font-weight:normal;color:#000008;transform:scaleX(0.9040);">2,00 €</div>
<div class="t" style="left:423.70px;top:403.87px;font-size:7.0px;line-height:7.0px;font-weight:normal;color:#000008;transform:scaleX(0.9554);">0,35 €</div>
<div class="t" style="left:457.50px;top:403.87px;font-size:7.0px;line-height:7.0px;font-weight:normal;color:#000008;transform:scaleX(0.9642);">10,00%</div>
<div style="left:12px;top:414.9px;width:8px;height:8px;background:#fff;box-sizing:border-box;border-top:1px solid #888;border-left:1px solid #888"></div>
<div class="t" style="left:55.50px;top:415.27px;font-size:7.0px;line-height:7.0px;font-weight:normal;color:#000008;transform:scaleX(0.8978);">52</div>
<div class="t" style="left:218.90px;top:415.27px;font-size:7.0px;line-height:7.0px;font-weight:normal;color:#000008;transform:scaleX(0.9196);">OASIS POMME CASSIS</div>
<div class="t" style="left:377.80px;top:415.27px;font-size:7.0px;line-height:7.0px;font-weight:normal;color:#000008;transform:scaleX(0.9040);">2,00 €</div>
<div class="t" style="left:423.70px;top:415.27px;font-size:7.0px;line-height:7.0px;font-weight:normal;color:#000008;transform:scaleX(0.9554);">0,35 €</div>
<div class="t" style="left:457.50px;top:415.27px;font-size:7.0px;line-height:7.0px;font-weight:normal;color:#000008;transform:scaleX(0.9642);">10,00%</div>
<div style="left:12px;top:426.3px;width:8px;height:8px;background:#fff;box-sizing:border-box;border-top:1px solid #888;border-left:1px solid #888"></div>
<div class="t" style="left:55.50px;top:426.67px;font-size:7.0px;line-height:7.0px;font-weight:normal;color:#000008;transform:scaleX(0.8978);">53</div>
<div class="t" style="left:92.30px;top:426.67px;font-size:7.0px;line-height:7.0px;font-weight:normal;color:#000008;transform:scaleX(0.9600);">4006008200672</div>
<div class="t" style="left:218.90px;top:426.67px;font-size:7.0px;line-height:7.0px;font-weight:normal;color:#000008;transform:scaleX(0.9290);">OASIS TROPICAL</div>
<div class="t" style="left:377.80px;top:426.67px;font-size:7.0px;line-height:7.0px;font-weight:normal;color:#000008;transform:scaleX(0.9040);">2,00 €</div>
<div class="t" style="left:423.70px;top:426.67px;font-size:7.0px;line-height:7.0px;font-weight:normal;color:#000008;transform:scaleX(0.9554);">0,35 €</div>
<div class="t" style="left:457.50px;top:426.67px;font-size:7.0px;line-height:7.0px;font-weight:normal;color:#000008;transform:scaleX(0.9642);">10,00%</div>
<div style="left:12px;top:437.7px;width:8px;height:8px;background:#fff;box-sizing:border-box;border-top:1px solid #888;border-left:1px solid #888"></div>
<div class="t" style="left:55.50px;top:438.07px;font-size:7.0px;line-height:7.0px;font-weight:normal;color:#000008;transform:scaleX(0.8978);">55</div>
<div class="t" style="left:218.90px;top:438.07px;font-size:7.0px;line-height:7.0px;font-weight:normal;color:#000008;transform:scaleX(0.9438);">JUS DE POMME</div>
<div class="t" style="left:377.80px;top:438.07px;font-size:7.0px;line-height:7.0px;font-weight:normal;color:#000008;transform:scaleX(0.9040);">2,00 €</div>
<div class="t" style="left:423.70px;top:438.07px;font-size:7.0px;line-height:7.0px;font-weight:normal;color:#000008;transform:scaleX(0.9554);">0,35 €</div>
<div class="t" style="left:457.50px;top:438.07px;font-size:7.0px;line-height:7.0px;font-weight:normal;color:#000008;transform:scaleX(0.9642);">10,00%</div>
<div style="left:6px;top:443.6px;width:638px;height:24.399999999999977px;background:#ffffff;"></div>
<div style="left:633px;top:219px;width:11px;height:224.60000000000002px;background:#ffffff;"></div>
<div style="left:634.2px;top:220px;width:8.7px;height:8.6px;background:#1f1f2e;"></div>
<div style="left:634.2px;top:231.2px;width:8.7px;height:201.8px;background:#1f1f2e;"></div>
<div style="left:633.6px;top:366.8px;width:10px;height:66.19999999999999px;background:#6c6c7c;"></div>
<div style="left:634.2px;top:433px;width:8.7px;height:10.5px;background:#1f1f2e;"></div>
<div style="left:636px;top:437px;width:3px;height:0.9px;background:#000000;"></div>
<div style="left:636px;top:223.8px;width:4px;height:2px;background:#050508;border-radius:0 1px 0 0"></div>
<div style="left:7.1px;top:444px;width:8.7px;height:9.7px;background:#1f1f2e;"></div>
<svg style="left:9.5px;top:446px" width="4" height="5" viewBox="0 0 4 5"><path d="M4 0 V5 L0 2.5Z" fill="#000"/></svg>
<div style="left:18.1px;top:444px;width:195.8px;height:9.5px;background:#1f1f2e;"></div>
<div style="left:213.9px;top:443px;width:408.5px;height:10.5px;background:#6c6c7c;"></div>
<div style="left:622.9px;top:444px;width:20.9px;height:9.9px;background:#1f1f2e;"></div>
<svg style="left:626px;top:446.4px" width="4" height="5" viewBox="0 0 4 5"><path d="M0 0 V5 L4 2.5Z" fill="#000"/></svg>
<div style="left:27px;top:455px;width:1px;height:11px;background:#8a8a8a;"></div>
<div style="left:153.7px;top:455px;width:1px;height:11px;background:#8a8a8a;"></div>
<div style="left:216.8px;top:455px;width:1px;height:11px;background:#8a8a8a;"></div>
<div style="left:350.2px;top:455px;width:1px;height:11px;background:#8a8a8a;"></div>
<div style="left:398.2px;top:455px;width:1px;height:11px;background:#8a8a8a;"></div>
<div style="left:444.2px;top:455px;width:1px;height:11px;background:#8a8a8a;"></div>
<div style="left:547.2px;top:455px;width:1px;height:11px;background:#8a8a8a;"></div>
<div style="left:610.4px;top:455px;width:1px;height:11px;background:#8a8a8a;"></div>
</div></body></html>
